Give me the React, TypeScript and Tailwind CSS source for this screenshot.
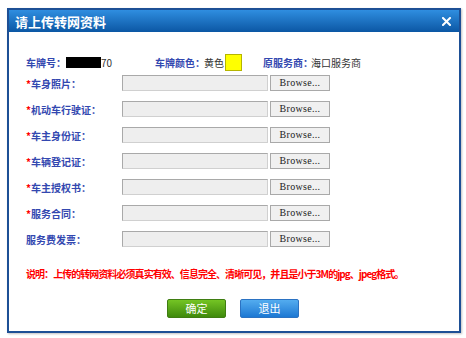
import React from "react";

const rows = [
  { label: "车身照片：", required: true },
  { label: "机动车行驶证：", required: true },
  { label: "车主身份证：", required: true },
  { label: "车辆登记证：", required: true },
  { label: "车主授权书：", required: true },
  { label: "服务合同：", required: true },
  { label: "服务费发票：", required: false },
];

const cjk = { fontFamily: '"Noto Sans CJK SC", "Noto Sans", sans-serif' };

export default function App() {
  return (
    <div className="w-[466px] h-[338px] bg-white pt-[8px] pl-[7px]" style={cjk}>
      <div className="w-[454px] h-[325px] border-2 border-[#1d4f95] bg-white shadow-[1px_1px_2px_rgba(0,0,0,0.25)] flex flex-col">
        {/* title bar */}
        <div className="h-[22px] flex items-center justify-between pl-[6px] pr-[8px] bg-gradient-to-b from-[#2f8ee0] to-[#0b57a4]">
          <span className="text-white text-[13px] font-bold leading-none">请上传转网资料</span>
          <svg width="9" height="9" viewBox="0 0 9 9">
            <path d="M1 1 L8 8 M8 1 L1 8" stroke="#ffffff" strokeWidth="2" strokeLinecap="square" />
          </svg>
        </div>

        <div className="pl-[17px] flex flex-col">
          {/* vehicle info */}
          <div className="mt-[21px] h-[18px] flex items-center text-[10px] whitespace-nowrap">
            <div className="w-[129px] shrink-0 flex items-center">
              <span className="w-[40px] shrink-0 font-bold text-[#3348b0]">车牌号：</span>
              <span className="w-[35px] h-[11px] shrink-0 bg-black" />
              <span className="text-[#333]">70</span>
            </div>
            <div className="w-[108px] shrink-0 flex items-center">
              <span className="w-[49px] shrink-0 font-bold text-[#3348b0]">车牌颜色：</span>
              <span className="w-[21px] shrink-0 text-[#333]">黄色</span>
              <span className="w-[17px] h-[17px] shrink-0 bg-[#ffff00] border border-[#b5b500]" />
            </div>
            <div className="flex items-center">
              <span className="w-[48px] shrink-0 font-bold text-[#3348b0]">原服务商：</span>
              <span className="text-[#333]">海口服务商</span>
            </div>
          </div>

          {/* upload rows */}
          <div className="mt-[-1px] flex flex-col">
            {rows.map((r) => (
              <div key={r.label} className="h-[26px] flex items-center">
                <span className="w-[96px] shrink-0 whitespace-nowrap text-[10px] font-bold text-[#3348b0]">
                  {r.required && <span className="text-[#ff0000]">*</span>}
                  {r.label}
                </span>
                <span className="w-[146px] h-[16px] shrink-0 bg-[#eeeeee] border border-t-[#a9a9a9] border-l-[#a9a9a9] border-r-[#d0d0d0] border-b-[#d0d0d0]" />
                <button
                  className="ml-[2px] w-[60px] h-[16px] shrink-0 bg-[#f0f0f0] border border-[#a9a9a9] text-[10px] leading-none text-[#222] text-center"
                  style={{ fontFamily: '"Liberation Serif", serif', letterSpacing: "0.3px" }}
                >
                  Browse...
                </button>
              </div>
            ))}
          </div>

          <p className="mt-[15px] h-[14px] text-[10px] leading-[14px] font-bold text-[#ff0000] tracking-[-0.95px] whitespace-nowrap">
            说明：上传的转网资料必须真实有效、信息完全、清晰可见，并且是小于3M的jpg、jpeg格式。
          </p>
        </div>

        {/* actions */}
        <div className="mt-[18px] flex justify-center gap-[14px] pr-[2px]">
          <button className="w-[59px] h-[19px] rounded-[2px] border border-[#3f7d12] bg-gradient-to-b from-[#74c424] to-[#3f8a0c] text-white text-[11px] leading-none">
            确定
          </button>
          <button className="w-[59px] h-[19px] rounded-[2px] border border-[#2b72c2] bg-gradient-to-b from-[#53acef] to-[#1b78d3] text-white text-[11px] leading-none">
            退出
          </button>
        </div>
      </div>
    </div>
  );
}
